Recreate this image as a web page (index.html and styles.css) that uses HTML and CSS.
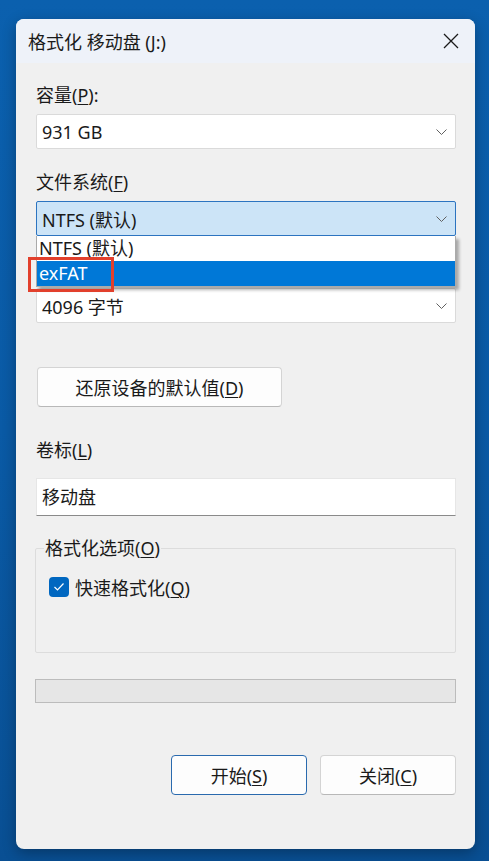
FILE: index.html
```html
<!DOCTYPE html>
<html lang="zh-CN">
<head>
    <meta charset="UTF-8">
    <meta name="viewport" content="width=device-width, initial-scale=1.0">
    <title>格式化 移动盘 (J:)</title>
    <link rel="stylesheet" href="styles.css">
</head>
<body>
    <!-- Format dialog -->
    <div class="dialog">
        <div class="titlebar">
            <span class="title">格式化 移动盘 (J:)</span>
            <svg class="close" width="16" height="16" viewBox="0 0 16 16">
                <path d="M1 1 L15 15 M15 1 L1 15" stroke="#1a1a1a" stroke-width="1.3" fill="none"/>
            </svg>
        </div>

        <div class="content">
            <div class="label first">容量(<u>P</u>):</div>
            <div class="select">
                <span>931 GB</span>
                <svg class="chev" width="11" height="6" viewBox="0 0 11 6"><path d="M0.5 0.5 L5.5 5.5 L10.5 0.5" stroke="#606060" stroke-width="1" fill="none"/></svg>
            </div>

            <div class="label">文件系统(<u>F</u>)</div>
            <div class="combo">
                <div class="select focused">
                    <span>NTFS (默认)</span>
                    <svg class="chev" width="11" height="6" viewBox="0 0 11 6"><path d="M0.5 0.5 L5.5 5.5 L10.5 0.5" stroke="#606060" stroke-width="1" fill="none"/></svg>
                </div>
                <!-- open dropdown list -->
                <div class="dropdown">
                    <div class="option">NTFS (默认)</div>
                    <div class="option selected">exFAT</div>
                    <div class="highlight"></div>
                </div>
            </div>

            <!-- label covered by the open list -->
            <div class="label covered">分配单元大小(<u>A</u>)</div>
            <div class="select">
                <span>4096 字节</span>
                <svg class="chev" width="11" height="6" viewBox="0 0 11 6"><path d="M0.5 0.5 L5.5 5.5 L10.5 0.5" stroke="#606060" stroke-width="1" fill="none"/></svg>
            </div>

            <button class="btn restore">还原设备的默认值(<u>D</u>)</button>

            <div class="label volume">卷标(<u>L</u>)</div>
            <div class="textbox">移动盘</div>

            <fieldset class="options">
                <legend>格式化选项(<u>O</u>)</legend>
                <div class="check-row">
                    <span class="checkbox">
                        <svg width="12" height="10" viewBox="0 0 12 10"><path d="M1.5 5 L4.5 8 L10.5 1.5" stroke="#fff" stroke-width="1.2" fill="none"/></svg>
                    </span>
                    <span>快速格式化(<u>Q</u>)</span>
                </div>
            </fieldset>

            <div class="progress"></div>

            <div class="footer">
                <button class="btn primary">开始(<u>S</u>)</button>
                <button class="btn">关闭(<u>C</u>)</button>
            </div>
        </div>
    </div>
</body>
</html>
```

FILE: styles.css
```css
/* Page and desktop background */
body {
    margin: 0;
    height: 861px;
    overflow: hidden;
    background: linear-gradient(180deg, #0b60ae 0%, #0a5aa5 50%, #094f93 100%);
    font-family: 'Noto Sans', 'Noto Sans CJK SC', sans-serif;
    font-size: 18px;
    color: #1a1a1a;
}

u {
    text-decoration-thickness: 1px;
    text-underline-offset: 2px;
}

/* Dialog window */
.dialog {
    margin: 19px 0 0 16px;
    width: 459px;
    height: 830px;
    background: #f0f0f0;
    border-radius: 8px;
    overflow: hidden;
    box-shadow: 0 4px 14px rgba(0,0,0,0.3);
    display: flex;
    flex-direction: column;
}

.titlebar {
    height: 44px;
    background: #eef2f9;
    display: flex;
    align-items: center;
    justify-content: space-between;
    padding: 0 16px 0 12px;
    flex-shrink: 0;
}

.content {
    padding: 0 19px 0 20px;
    display: flex;
    flex-direction: column;
}

/* Field labels */
.label {
    line-height: 24px;
    margin: 21px 0 7px;
}

.label.first {
    margin-top: 20px;
}

.label.covered {
    visibility: hidden;
}

.label.volume {
    margin: 31px 0 16px;
}

/* Combo boxes */
.select {
    height: 35px;
    box-sizing: border-box;
    background: #fff;
    border: 1px solid #dadada;
    border-radius: 2px;
    display: flex;
    align-items: center;
    justify-content: space-between;
    padding: 0 8px 0 5px;
}

.select.focused {
    background: #cce4f7;
    border-color: #2c74c0;
}

.combo {
    position: relative;
}

.dropdown {
    position: absolute;
    top: 35px;
    left: 0;
    right: 0;
    z-index: 2;
    background: #fff;
    border: 1px solid #aaa;
    border-top: none;
    box-shadow: 3px 3px 3px rgba(0,0,0,0.3);
}

.option {
    height: 25px;
    line-height: 25px;
    padding-left: 2px;
}

.option.selected {
    background: #0078d7;
    color: #fff;
}

/* Red marker around exFAT */
.highlight {
    position: absolute;
    left: -9px;
    top: 21px;
    width: 86px;
    height: 35px;
    box-sizing: border-box;
    border: 3px solid #e2402c;
}

/* Buttons */
.btn {
    font-family: inherit;
    font-size: 18px;
    color: #1a1a1a;
    background: #fdfdfd;
    border: 1px solid #d4d4d4;
    border-bottom-color: #b8b8b8;
    border-radius: 4px;
    height: 40px;
    padding: 0;
}

.restore {
    width: 245px;
    margin: 44px 0 0 1px;
}

.btn.primary {
    border: 1px solid #2a6aae;
}

/* Volume label box */
.textbox {
    height: 38px;
    box-sizing: border-box;
    background: #fff;
    border: 1px solid #e6e6e6;
    border-bottom: 1px solid #8a8a8a;
    padding: 0 5px;
    line-height: 36px;
}

/* Group box */
.options {
    margin: 22px 0 0 -1px;
    height: 115px;
    box-sizing: border-box;
    border: 1px solid #dcdcdc;
    border-radius: 2px;
    padding: 0 13px;
}

.options legend {
    padding: 0 1px;
    margin-left: -5px;
    line-height: 20px;
}

.check-row {
    display: flex;
    align-items: center;
    gap: 6px;
    margin-top: 16px;
}

.checkbox {
    width: 20px;
    height: 20px;
    border-radius: 4px;
    background: #0067c0;
    display: flex;
    align-items: center;
    justify-content: center;
}

/* Progress bar */
.progress {
    margin: 26px 0 0 -1px;
    height: 24px;
    box-sizing: border-box;
    background: #e6e6e6;
    border: 1px solid #bcbcbc;
}

/* Footer buttons */
.footer {
    display: flex;
    justify-content: flex-end;
    gap: 13px;
    margin-top: 52px;
}

.footer .btn {
    width: 136px;
}
```
